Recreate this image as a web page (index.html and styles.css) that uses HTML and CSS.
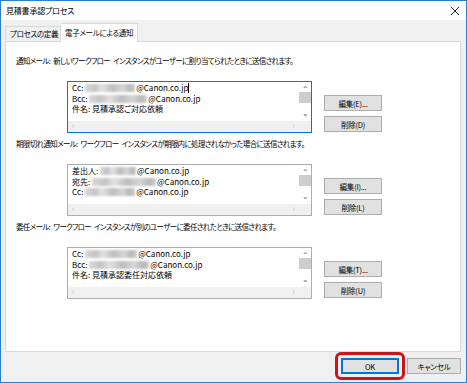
FILE: index.html
```html
<!DOCTYPE html>
<html lang="ja">
<head>
    <meta charset="UTF-8">
    <title>見積書承認プロセス</title>
    <link rel="stylesheet" href="styles.css">
</head>
<body>
    <div class="window">
        <div class="titlebar">
            <span class="title">見積書承認プロセス</span>
            <svg class="close" width="10" height="10" viewBox="0 0 10 10">
                <path d="M1 1 L9 9 M9 1 L1 9" stroke="#222" stroke-width="1" fill="none"/>
            </svg>
        </div>
        <div class="client">
            <div class="tabs">
                <div class="tab">プロセスの定義</div>
                <div class="tab active">電子メールによる通知</div>
            </div>
            <div class="panel">
                <!-- 通知メール -->
                <div class="section">
                    <div class="caption">通知メール: 新しいワークフロー インスタンスがユーザーに割り当てられたときに送信されます。</div>
                    <div class="row">
                        <div class="memo focused">
                            <div class="memo-text">
                                <div class="line">Cc: <span class="blur w50"></span>@Canon.co.jp<span class="caret"></span></div>
                                <div class="line">Bcc: <span class="blur w58"></span>@Canon.co.jp</div>
                                <div class="line">件名: 見積承認ご対応依頼</div>
                            </div>
                            <div class="vscroll"><span class="arr">&#8963;</span><span class="thumb"></span><span class="arr down">&#8964;</span></div>
                            <div class="hscroll"><span>&lsaquo;</span><span>&rsaquo;</span></div>
                            <div class="corner"></div>
                        </div>
                        <div class="btns">
                            <button class="btn">編集(E)...</button>
                            <button class="btn">削除(D)</button>
                        </div>
                    </div>
                </div>
                <!-- 期限切れ通知メール -->
                <div class="section">
                    <div class="caption">期限切れ通知メール: ワークフロー インスタンスが期限内に処理されなかった場合に送信されます。</div>
                    <div class="row">
                        <div class="memo">
                            <div class="memo-text">
                                <div class="line">差出人: <span class="blur w36"></span>@Canon.co.jp</div>
                                <div class="line">宛先: <span class="blur w64"></span>@Canon.co.jp</div>
                                <div class="line">Cc: <span class="blur w50"></span>@Canon.co.jp</div>
                            </div>
                            <div class="vscroll"><span class="arr">&#8963;</span><span class="thumb"></span><span class="arr down">&#8964;</span></div>
                            <div class="hscroll"><span>&lsaquo;</span><span>&rsaquo;</span></div>
                            <div class="corner"></div>
                        </div>
                        <div class="btns">
                            <button class="btn">編集(I)...</button>
                            <button class="btn">削除(L)</button>
                        </div>
                    </div>
                </div>
                <!-- 委任メール -->
                <div class="section">
                    <div class="caption">委任メール: ワークフロー インスタンスが別のユーザーに委任されたときに送信されます。</div>
                    <div class="row">
                        <div class="memo">
                            <div class="memo-text">
                                <div class="line">Cc: <span class="blur w52"></span>@Canon.co.jp</div>
                                <div class="line">Bcc: <span class="blur w60"></span>@Canon.co.jp</div>
                                <div class="line">件名: 見積承認委任対応依頼</div>
                            </div>
                            <div class="vscroll"><span class="arr">&#8963;</span><span class="thumb"></span><span class="arr down">&#8964;</span></div>
                            <div class="hscroll"><span>&lsaquo;</span><span>&rsaquo;</span></div>
                            <div class="corner"></div>
                        </div>
                        <div class="btns">
                            <button class="btn">編集(T)...</button>
                            <button class="btn">削除(U)</button>
                        </div>
                    </div>
                </div>
            </div>
            <div class="footer">
                <div class="ok-wrap">
                    <button class="btn default">OK</button>
                    <span class="highlight"></span>
                </div>
                <button class="btn">キャンセル</button>
            </div>
        </div>
    </div>
</body>
</html>
```

FILE: styles.css
```css
* {
    margin: 0;
    padding: 0;
    box-sizing: border-box;
}

body {
    font-family: "Noto Sans CJK JP", "Noto Sans", sans-serif;
    font-size: 8px;
    font-feature-settings: "palt";
    color: #000;
    background: #fff;
}

.window {
    width: 467px;
    height: 383px;
    border: 1px solid #2a7fd0;
    display: flex;
    flex-direction: column;
    background: #f0f0f0;
}

.titlebar {
    height: 19px;
    background: #fff;
    display: flex;
    align-items: center;
    justify-content: space-between;
    padding: 0 6px 0 5px;
}

.title {
    font-size: 8px;
    letter-spacing: -0.2px;
}

.close {
    margin-top: 1px;
}

.client {
    flex: 1;
    display: flex;
    flex-direction: column;
    padding: 3px 5px 0 4px;
}

.tabs {
    display: flex;
    align-items: flex-end;
    height: 18px;
}

.tab {
    height: 15px;
    line-height: 14px;
    padding: 0 4px;
    border: 1px solid #d9d9d9;
    border-bottom: none;
    background: #f0f0f0;
    width: 56px;
    white-space: nowrap;
    font-size: 7.5px;
    letter-spacing: -0.3px;
}

.tab.active {
    height: 19px;
    line-height: 17px;
    background: #fff;
    width: 77px;
    border-left: none;
    margin-bottom: -1px;
    position: relative;
    z-index: 1;
}

.panel {
    height: 311px;
    background: #fff;
    border: 1px solid #d9d9d9;
    padding: 13px 10px 0 10px;
}

.section {
    margin-bottom: 5px;
}

.caption {
    height: 12px;
    line-height: 12px;
    margin-bottom: 14px;
    white-space: nowrap;
    font-size: 7.5px;
    letter-spacing: -0.65px;
    word-spacing: 2px;
}

.row {
    display: flex;
    margin-left: 51px;
}

.memo {
    width: 245px;
    height: 52px;
    border: 1px solid #adadad;
    display: grid;
    grid-template-columns: 1fr 12px;
    grid-template-rows: 1fr 11px;
    background: #fff;
}

.memo.focused {
    border-color: #0078d7;
}

.memo-text {
    padding: 1px 4px;
    overflow: hidden;
}

.line {
    height: 10.5px;
    line-height: 10.5px;
    white-space: nowrap;
}

.blur {
    display: inline-block;
    height: 8px;
    vertical-align: -1px;
    background: linear-gradient(90deg, #d8d8d8 0%, #c4c4c4 20%, #e2e2e2 35%, #bdbdbd 55%, #d5d5d5 75%, #b8b8b8 90%, #cfcfcf 100%);
    filter: blur(0.8px);
    margin-right: 1px;
}

.w36 { width: 36px; }
.w50 { width: 50px; }
.w52 { width: 52px; }
.w58 { width: 58px; }
.w60 { width: 60px; }
.w64 { width: 64px; }

.caret {
    display: inline-block;
    width: 1px;
    height: 10px;
    background: #000;
    vertical-align: -2px;
}

.vscroll {
    background: #fff;
    display: flex;
    flex-direction: column;
    align-items: center;
    font-size: 8px;
    color: #606060;
    line-height: 9px;
}

.vscroll .arr {
    height: 10px;
    padding-top: 2px;
}

.vscroll .arr.down {
    height: 9px;
    padding-top: 0;
    line-height: 6px;
}

.thumb {
    width: 100%;
    height: 11px;
    background: #cdcdcd;
    margin-bottom: 7px;
}

.hscroll {
    background: #f0f0f0;
    display: flex;
    justify-content: space-between;
    padding: 0 4px;
    color: #bfbfbf;
    font-size: 9px;
    line-height: 10px;
}

.corner {
    background: #f0f0f0;
}

.btns {
    display: flex;
    flex-direction: column;
    gap: 5px;
    margin: 14px 0 0 12px;
}

.btn {
    width: 58px;
    height: 16px;
    border: 1px solid #adadad;
    background: #e1e1e1;
    font-family: inherit;
    font-size: 7.5px;
    letter-spacing: -0.2px;
    font-feature-settings: "palt";
    color: #000;
}

.footer {
    display: flex;
    justify-content: flex-end;
    gap: 8px;
    padding: 6px 0 0 0;
}

.footer .btn {
    width: 54px;
}

.ok-wrap {
    position: relative;
}

.footer .btn.default {
    width: 58px;
    border: 1px solid #0078d7;
    box-shadow: inset 0 0 0 1px #0078d7;
}

.highlight {
    position: absolute;
    left: -6px;
    top: -6px;
    width: 70px;
    height: 28px;
    border: 3px solid #d0121b;
    border-radius: 6px;
}
```
